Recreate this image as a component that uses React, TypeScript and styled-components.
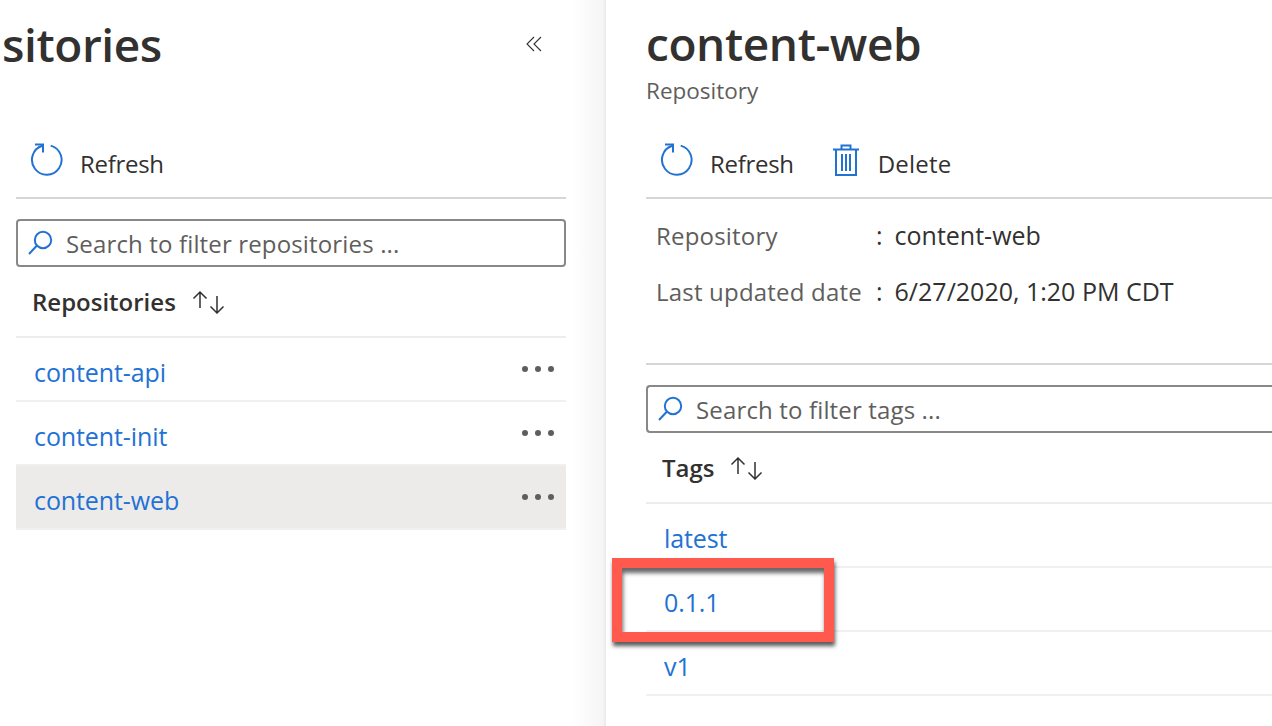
import React from "react";
import styled, { createGlobalStyle } from "styled-components";

const GlobalStyle = createGlobalStyle`
  html, body {
    margin: 0;
    padding: 0;
    background: #fff;
  }
  body {
    font-family: "Open Sans", "Noto Sans", "Liberation Sans", sans-serif;
    color: #323130;
  }
`;

const Page = styled.div`
  display: flex;
  width: 1272px;
  height: 726px;
  overflow: hidden;
`;

const LeftPane = styled.section`
  width: 606px;
  flex-shrink: 0;
  box-sizing: border-box;
  padding: 0 40px 0 16px;
  background: linear-gradient(to right, #fff 0, #fff 572px, #f5f5f5 603px, #e8e8e8 606px);
`;

const RightPane = styled.section`
  flex: 1;
  min-width: 0;
  box-sizing: border-box;
  padding-left: 40px;
`;

const TitleRow = styled.div`
  display: flex;
  justify-content: space-between;
  align-items: center;
  height: 88px;
  margin-left: -14px;
`;

const LeftTitle = styled.h1`
  margin: 0;
  font-size: 46px;
  line-height: 88px;
  font-weight: 600;
  letter-spacing: -0.4px;
  white-space: nowrap;
`;

const CollapseButton = styled.span`
  display: flex;
  margin-right: 24px;
`;

const PaneTitle = styled.h1`
  margin: 0;
  padding-top: 15px;
  font-size: 46px;
  line-height: 56px;
  font-weight: 600;
  letter-spacing: -0.4px;
`;

const Subtitle = styled.div`
  font-size: 22.5px;
  line-height: 30px;
  color: #605e5c;
  margin-top: 5px;
`;

const Toolbar = styled.div<{ $top: number }>`
  display: flex;
  align-items: center;
  gap: 36px;
  height: 54px;
  margin-top: ${(p) => p.$top}px;
  padding: 0 0 10px 14px;
  border-bottom: 2px solid #d6d6d6;
`;

const ToolButton = styled.span`
  display: flex;
  align-items: center;
  gap: 16px;
  font-size: 24px;
  letter-spacing: -0.3px;
`;

const TrashButton = styled(ToolButton)`
  gap: 18px;
  margin-left: 2px;
  letter-spacing: 0.2px;
`;

const ToolLabel = styled.span`
  padding-top: 6px;
`;

const SearchBox = styled.div<{ $open?: boolean }>`
  display: flex;
  align-items: center;
  gap: 12px;
  box-sizing: border-box;
  height: 48px;
  margin-top: 20px;
  padding-left: 10px;
  border: 2px solid #8a8886;
  border-radius: 4px;
  border-right-width: ${(p) => (p.$open ? 0 : 2)}px;
  border-top-right-radius: ${(p) => (p.$open ? 0 : 4)}px;
  border-bottom-right-radius: ${(p) => (p.$open ? 0 : 4)}px;
  font-size: 24px;
  letter-spacing: 0.15px;
  color: #605e5c;
  white-space: nowrap;
`;

const ColumnHeader = styled.div`
  display: flex;
  align-items: center;
  gap: 16px;
  height: 71px;
  box-sizing: border-box;
  padding-left: 16px;
  border-bottom: 2px solid #ededed;
  font-size: 24px;
  font-weight: 600;
`;

const Row = styled.div<{ $selected?: boolean }>`
  display: flex;
  align-items: center;
  justify-content: space-between;
  box-sizing: border-box;
  height: 64px;
  padding: 0 12px 0 18px;
  border-bottom: 2px solid #f1f0ef;
  background: ${(p) => (p.$selected ? "#edebe9" : "transparent")};
  position: relative;
`;

const RowLink = styled.a`
  padding-top: 6px;
  font-size: 25px;
  letter-spacing: -0.1px;
  color: #2272d4;
`;

const MoreDots = styled.span`
  display: flex;
  gap: 6.8px;
  margin-top: -1px;
`;

const Dot = styled.i`
  width: 6px;
  height: 6px;
  border-radius: 50%;
  background: #605e5c;
`;

const InfoList = styled.div`
  display: grid;
  grid-template-columns: 220px 1fr;
  grid-auto-rows: 56px;
  align-items: center;
  align-content: start;
  padding: 8px 0 0 10px;
  height: 166px;
  box-sizing: border-box;
  border-bottom: 2px solid #d6d6d6;
`;

const InfoLabel = styled.span`
  font-size: 24px;
  letter-spacing: 0.2px;
  color: #605e5c;
`;

const InfoValue = styled.span`
  font-size: 25px;
  &::before {
    content: ":";
    margin-right: 12px;
  }
`;

const Highlight = styled.span`
  position: absolute;
  left: -34px;
  top: -10px;
  width: 222px;
  height: 84px;
  box-sizing: border-box;
  border: 10px solid #ff5a4d;
  box-shadow: 1px 4px 4px rgba(0, 0, 0, 0.65), inset 1px 5px 4px rgba(0, 0, 0, 0.6);
`;

const RefreshIcon = () => (
  <svg width="34" height="34" viewBox="0 0 34 34" fill="none" stroke="#2272d4" strokeWidth="2">
    <path d="M20.7 2.6A14.8 14.8 0 1 1 12.2 2.8" />
    <path d="M5 1.5h8v8" />
  </svg>
);

const TrashIcon = () => (
  <svg width="28" height="34" viewBox="0 0 28 34" fill="none" stroke="#2272d4" strokeWidth="2">
    <path d="M1 6.5h26M9.5 6V2.5h9V6" />
    <path d="M4 7v25h20V7" />
    <path d="M10 11v17M14 11v17M18 11v17" />
  </svg>
);

const SearchIcon = () => (
  <svg width="26" height="26" viewBox="0 0 26 26" fill="none" stroke="#2272d4" strokeWidth="2">
    <circle cx="15" cy="10" r="8.2" />
    <path d="M9 15.5L1 24" />
  </svg>
);

const SortIcon = () => (
  <svg width="36" height="24" viewBox="0 0 36 24" fill="none" stroke="#323130" strokeWidth="1.5">
    <path d="M8 18V2M1.5 8.5L8 2l6.5 6.5" />
    <path d="M25 6v17M18.5 16.5L25 23l6.5-6.5" />
  </svg>
);

const ChevronsIcon = () => (
  <svg width="16" height="16" viewBox="0 0 16 16" fill="none" stroke="#323130" strokeWidth="1.1">
    <path d="M8 1L1 8l7 7M15 1L8 8l7 7" />
  </svg>
);

const Dots = () => (
  <MoreDots>
    <Dot />
    <Dot />
    <Dot />
  </MoreDots>
);

const repositories = ["content-api", "content-init", "content-web"];

export default function App() {
  return (
    <Page>
      <GlobalStyle />
      <LeftPane>
        <TitleRow>
          <LeftTitle>sitories</LeftTitle>
          <CollapseButton>
            <ChevronsIcon />
          </CollapseButton>
        </TitleRow>
        <Toolbar $top={45}>
          <ToolButton>
            <RefreshIcon />
            <ToolLabel>Refresh</ToolLabel>
          </ToolButton>
        </Toolbar>
        <SearchBox>
          <SearchIcon />
          Search to filter repositories ...
        </SearchBox>
        <ColumnHeader>
          Repositories
          <SortIcon />
        </ColumnHeader>
        {repositories.map((name) => (
          <Row key={name} $selected={name === "content-web"}>
            <RowLink>{name}</RowLink>
            <Dots />
          </Row>
        ))}
      </LeftPane>
      <RightPane>
        <PaneTitle>content-web</PaneTitle>
        <Subtitle>Repository</Subtitle>
        <Toolbar $top={27}>
          <ToolButton>
            <RefreshIcon />
            <ToolLabel>Refresh</ToolLabel>
          </ToolButton>
          <TrashButton>
            <TrashIcon />
            <ToolLabel>Delete</ToolLabel>
          </TrashButton>
        </Toolbar>
        <InfoList>
          <InfoLabel>Repository</InfoLabel>
          <InfoValue>content-web</InfoValue>
          <InfoLabel>Last updated date</InfoLabel>
          <InfoValue>6/27/2020, 1:20 PM CDT</InfoValue>
        </InfoList>
        <SearchBox $open>
          <SearchIcon />
          Search to filter tags ...
        </SearchBox>
        <ColumnHeader>
          Tags
          <SortIcon />
        </ColumnHeader>
        <Row>
          <RowLink>latest</RowLink>
        </Row>
        <Row>
          <RowLink>0.1.1</RowLink>
          <Highlight />
        </Row>
        <Row>
          <RowLink>v1</RowLink>
        </Row>
      </RightPane>
    </Page>
  );
}
